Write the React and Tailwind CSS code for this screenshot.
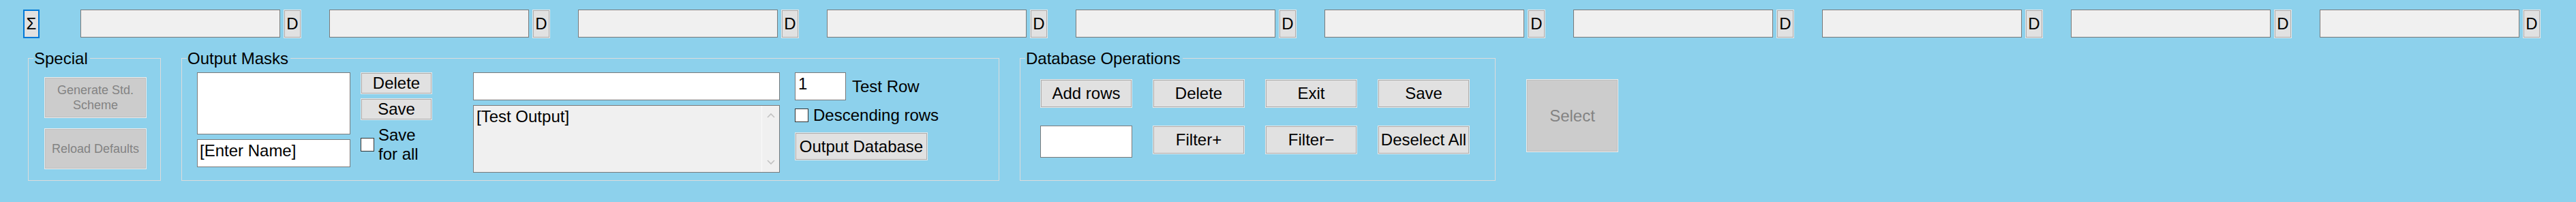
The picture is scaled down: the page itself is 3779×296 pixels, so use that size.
import React from 'react';

const fields = [0, 1, 2, 3, 4, 5, 6, 7, 8, 9];

const Btn = ({ className = '', children }) => (
    <button className={`flex items-center justify-center border border-[#e8e8e8] bg-[#e1e1e1] shadow-[inset_0_0_0_1px_#adadad] text-black ${className}`}>
        {children}
    </button>
);

const DisabledBtn = ({ className = '', children }) => (
    <button className={`flex items-center justify-center text-center border border-[#ececec] bg-[#cccccc] shadow-[inset_0_0_0_1px_#bfbfbf] text-[#838383] ${className}`}>
        {children}
    </button>
);

const Check = () => <div className="w-[20px] h-[20px] shrink-0 border border-[#333333] bg-white" />;

const Group = ({ title, className = '', children }) => (
    <fieldset className={`border border-[#dcdcdc] ${className}`}>
        <legend className="ml-[7px] pl-[1px] pr-[3px] text-[24px] leading-[23px] text-black">{title}</legend>
        {children}
    </fieldset>
);

const Chevron = ({ up }) => (
    <svg width="12" height="8" viewBox="0 0 12 8" className="text-[#c2c2c2]">
        <path d={up ? 'M1 7 L6 2 L11 7' : 'M1 1 L6 6 L11 1'} fill="none" stroke="currentColor" strokeWidth="1.6" />
    </svg>
);

export default function App() {
    return (
        <div className="w-[3779px] h-[296px] bg-[#8dd1ec] font-['Liberation_Sans',Arial,sans-serif] text-[24px] leading-none text-black">
            {/* column header strip */}
            <div className="flex items-start pt-[14px] pl-[34px]">
                <button className="w-[24px] h-[42px] flex items-center justify-center border-2 border-[#0078d7] bg-[#e1e1e1]">Σ</button>
                <div className="ml-[60px] flex items-start gap-[41px]">
                    {fields.map((i) => (
                        <div key={i} className="flex items-start gap-[5px]">
                            <div className="w-[293px] h-[41px] border border-[#7a7a7a] bg-[#f0f0f0]" />
                            <Btn className="w-[26px] h-[42px]">D</Btn>
                        </div>
                    ))}
                </div>
            </div>

            <div className="flex items-start mt-[18px] pl-[41px]">
                <Group title="Special" className="w-[195px] h-[191px]">
                    <div className="flex flex-col gap-[15px] pl-[23px] pt-[16px]">
                        <DisabledBtn className="w-[150px] h-[60px] text-[18px] leading-[22px]">
                            Generate Std.<br />Scheme
                        </DisabledBtn>
                        <DisabledBtn className="w-[150px] h-[60px] text-[18px] leading-[22px]">
                            Reload Defaults
                        </DisabledBtn>
                    </div>
                </Group>

                <Group title="Output Masks" className="ml-[30px] w-[1200px] h-[191px]">
                    <div className="flex items-start pl-[22px] pt-[9px]">
                        <div className="flex flex-col gap-[7px]">
                            <div className="w-[225px] h-[91px] border border-[#7a7a7a] bg-white" />
                            <div className="w-[225px] h-[41px] border border-[#7a7a7a] bg-white pl-[3px] pt-[4px] leading-[24px]">[Enter Name]</div>
                        </div>
                        <div className="ml-[15px] w-[105px] flex flex-col">
                            <Btn className="w-[105px] h-[32px]">Delete</Btn>
                            <Btn className="mt-[6px] w-[105px] h-[32px]">Save</Btn>
                            <div className="mt-[8px] flex items-center gap-[6px]">
                                <Check />
                                <div className="leading-[28px]">Save<br />for all</div>
                            </div>
                        </div>
                        <div className="ml-[60px] flex flex-col gap-[7px]">
                            <div className="w-[450px] h-[41px] border border-[#7a7a7a] bg-white" />
                            <div className="w-[450px] h-[99px] border border-[#7a7a7a] bg-[#f0f0f0] flex">
                                <div className="flex-1 pl-[4px] pt-[4px] leading-[24px]">[Test Output]</div>
                                <div className="w-[26px] border-l border-[#fafafa] flex flex-col items-center justify-between pt-[10px] pb-[10px]">
                                    <Chevron up />
                                    <Chevron />
                                </div>
                            </div>
                        </div>
                        <div className="ml-[22px] flex flex-col">
                            <div className="flex items-center">
                                <div className="w-[75px] h-[41px] border border-[#7a7a7a] bg-white pl-[4px] pt-[4px] leading-[24px]">1</div>
                                <span className="ml-[9px]">Test Row</span>
                            </div>
                            <div className="mt-[12px] h-[20px] flex items-center gap-[7px]">
                                <Check />
                                <span className="leading-[20px]">Descending rows</span>
                            </div>
                            <Btn className="mt-[15px] w-[195px] h-[41px]">Output Database</Btn>
                        </div>
                    </div>
                </Group>

                <Group title="Database Operations" className="ml-[30px] w-[698px] h-[191px]">
                    <div className="grid grid-cols-[repeat(4,135px)] gap-x-[30px] gap-y-[26px] items-start pl-[29px] pt-[19px]">
                        <Btn className="h-[42px]">Add rows</Btn>
                        <Btn className="h-[42px]">Delete</Btn>
                        <Btn className="h-[42px]">Exit</Btn>
                        <Btn className="h-[42px]">Save</Btn>
                        <div className="h-[47px] border border-[#7a7a7a] bg-white" />
                        <Btn className="h-[42px]">Filter+</Btn>
                        <Btn className="h-[42px]">Filter−</Btn>
                        <Btn className="h-[42px]">Deselect All</Btn>
                    </div>
                </Group>

                <DisabledBtn className="ml-[45px] mt-[42px] w-[135px] h-[107px]">Select</DisabledBtn>
            </div>
        </div>
    );
}
